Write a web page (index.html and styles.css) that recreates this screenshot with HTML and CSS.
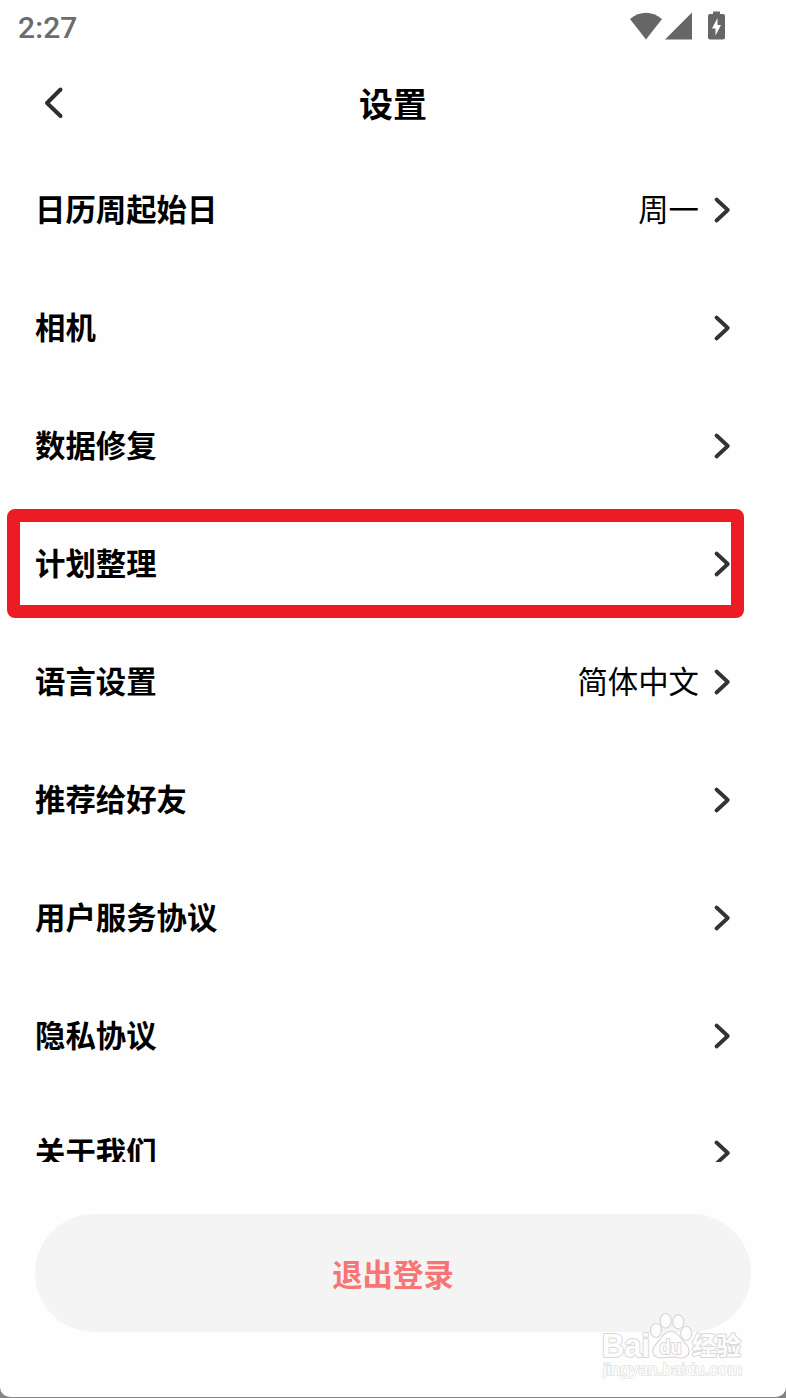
FILE: index.html
```html
<!DOCTYPE html>
<html lang="zh-CN">
<head>
  <meta charset="UTF-8">
  <title>设置</title>
  <link rel="stylesheet" href="styles.css">
</head>
<body>
  <svg class="defs" width="0" height="0">
    <symbol id="chevron" viewBox="0 0 18 28">
      <path d="M3.5 3.5 L14.8 14 L3.5 24.5"/>
    </symbol>
  </svg>

  <div class="screen">
    <div class="status-bar">
      <span class="time">2:27</span>
      <svg class="status-icons" width="98" height="30" viewBox="0 0 98 30">
        <path d="M0 7 Q16 -5.5 32 7 L16 27.5 Z"/>
        <path d="M35 27.5 L62 0.5 V27.5 Z"/>
        <path d="M83 -0.5 H90 V2 H93 Q95 2 95 4 V25.5 Q95 27.5 93 27.5 H80 Q78 27.5 78 25.5 V4 Q78 2 80 2 H83 Z"/>
        <path class="bolt" d="M87.5 6 L82 16.5 H85.5 V23.5 L91 13 H87.5 Z"/>
      </svg>
    </div>

    <div class="header">
      <svg class="back" width="22" height="34" viewBox="0 0 22 34"><path d="M18.5 3.5 L5 17 L18.5 30"/></svg>
      <h1>设置</h1>
    </div>

    <div class="list">
      <div class="row"><b>日历周起始日</b><span>周一</span><svg class="arrow"><use href="#chevron"/></svg></div>
      <div class="row"><b>相机</b><svg class="arrow"><use href="#chevron"/></svg></div>
      <div class="row"><b>数据修复</b><svg class="arrow"><use href="#chevron"/></svg></div>
      <div class="row marked"><b>计划整理</b><svg class="arrow"><use href="#chevron"/></svg></div>
      <div class="row"><b>语言设置</b><span>简体中文</span><svg class="arrow"><use href="#chevron"/></svg></div>
      <div class="row"><b>推荐给好友</b><svg class="arrow"><use href="#chevron"/></svg></div>
      <div class="row"><b>用户服务协议</b><svg class="arrow"><use href="#chevron"/></svg></div>
      <div class="row"><b>隐私协议</b><svg class="arrow"><use href="#chevron"/></svg></div>
      <div class="row last"><b>关于我们</b><svg class="arrow"><use href="#chevron"/></svg></div>
    </div>

    <button class="logout">退出登录</button>
  </div>

  <svg class="watermark" width="150" height="76" viewBox="0 0 150 76">
    <g class="logo">
      <text x="0" y="49" font-size="33" textLength="48" lengthAdjust="spacingAndGlyphs">Bai</text>
      <g class="paw">
        <ellipse cx="54" cy="22.5" rx="5.5" ry="7"/>
        <ellipse cx="63.7" cy="12.8" rx="5.5" ry="7.3"/>
        <ellipse cx="76.3" cy="13.8" rx="5.5" ry="7"/>
        <ellipse cx="84.2" cy="25.5" rx="5.5" ry="7"/>
        <path d="M69 23.500 C76 23.500 78 30 82 34 C91 42 87 50 79 50 C73 49 66 49 60 50 C50 50 48 42 55 35 C60 30 61 23.500 69 23.500 Z"/>
      </g>
      <text class="du" x="57.5" y="45.5" font-size="20" textLength="22" lengthAdjust="spacingAndGlyphs">du</text>
      <text x="90" y="47" font-size="25" textLength="49" lengthAdjust="spacingAndGlyphs">经验</text>
    </g>
    <text class="site" x="1" y="67" font-size="17" textLength="139" lengthAdjust="spacingAndGlyphs">jingyan.baidu.com</text>
  </svg>
</body>
</html>
```
FILE: styles.css
```css
* { box-sizing: border-box; }
body {
  background-color: #858585;
  font-family: "Noto Sans CJK SC", sans-serif;
  margin: 0;
  height: 1398px;
  overflow: hidden;
}
.defs { position: absolute; }
.screen {
  display: flex;
  flex-direction: column;
  height: 1397px;
  background-color: #fefefe;
  border-radius: 0 0 10px 10px;
}
.status-bar {
  display: flex;
  justify-content: space-between;
  align-items: center;
  height: 54px;
  padding: 0 58px 0 18px;
}
.time { font-family: Roboto, sans-serif; font-size: 30px; font-weight: 500; letter-spacing: 0.1px; color: #6c6c6c; }
.status-icons { fill: #666; overflow: visible; }
.status-icons .bolt { fill: #fff; }
.header {
  display: grid;
  grid-template-columns: 60px 1fr 60px;
  align-items: center;
  height: 97px;
  padding: 0 42px;
}
.header h1 { margin: 0; font-size: 34px; font-weight: bold; text-align: center; line-height: 50px; }
.back { fill: none; stroke: #2e2e2e; stroke-width: 4; stroke-linecap: round; stroke-linejoin: round; }
.list { height: 1011px; overflow: hidden; }
.row {
  display: flex;
  align-items: center;
  height: 118px;
  padding: 0 55px 0 35px;
  font-size: 30.4px;
  line-height: 44px;
  color: #000;
}
.row b { flex: 1; font-weight: bold; padding-bottom: 4px; }
.row span { margin-right: 14px; padding-bottom: 4px; }
.last { height: 116px; }
.arrow {
  width: 18px;
  height: 28px;
  fill: none;
  stroke: #333;
  stroke-width: 3.8;
  stroke-linecap: round;
  stroke-linejoin: round;
}
/* red frame sits on top of the row */
.marked { position: relative; }
.marked::after {
  content: "";
  box-sizing: border-box;
  position: absolute;
  left: 7px;
  top: 4px;
  width: 737px;
  height: 109px;
  border: 13px solid #ed1c24;
  border-radius: 8px;
}
.logout {
  width: 716px;
  height: 118px;
  margin: 52px 35px 0;
  border: none;
  border-radius: 59px;
  background-color: #f4f4f4;
  color: #f87475;
  font-family: inherit;
  font-size: 30.4px;
  font-weight: bold;
}
.watermark { position: absolute; left: 602px; top: 1308px; }
.logo {
  fill: #fdfdfd;
  stroke: #d8d8d8;
  stroke-width: 2;
  paint-order: stroke;
  stroke-linejoin: round;
  font-weight: bold;
  font-family: "Liberation Sans", "Noto Sans CJK SC", sans-serif;
}
.paw { stroke-width: 1.2; paint-order: normal; }
.site { fill: #fff; stroke: #e2e2e2; stroke-width: 1.6; paint-order: stroke; font-family: "Liberation Sans", sans-serif; }
```
